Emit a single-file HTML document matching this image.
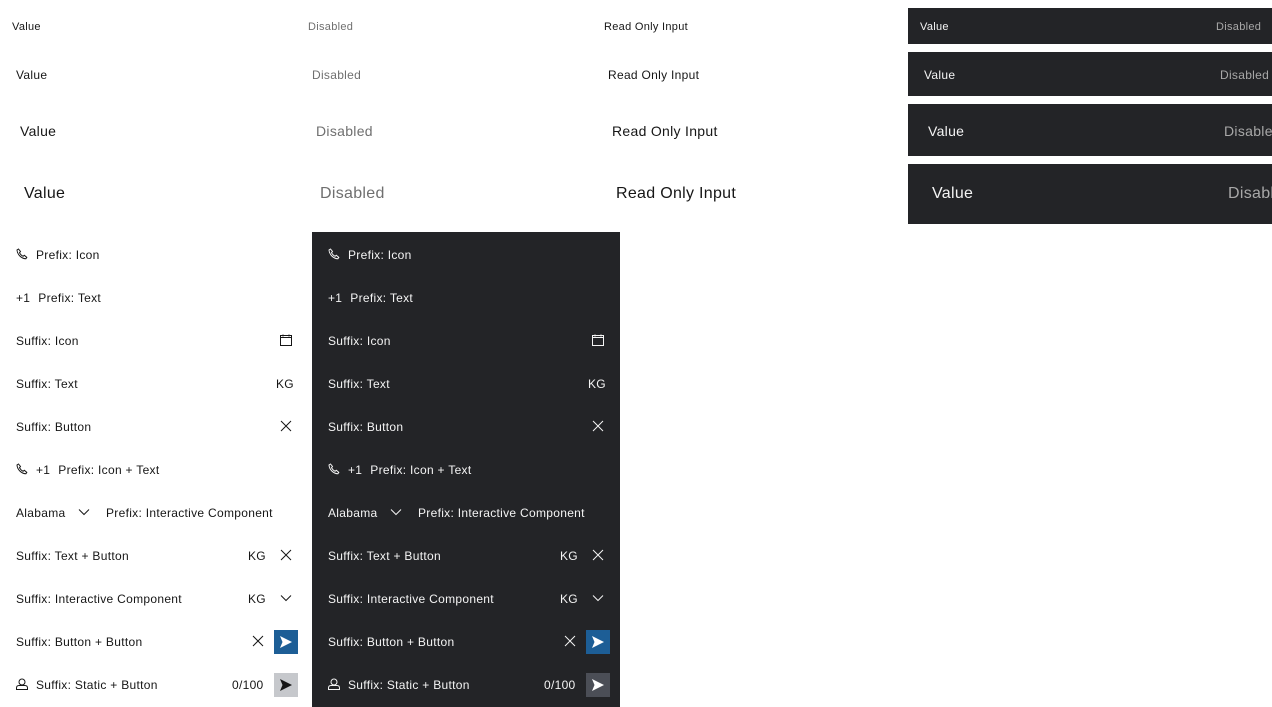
<!DOCTYPE html>
<html><head><meta charset="utf-8"><style>
*{margin:0;padding:0;box-sizing:border-box}
body{width:1272px;height:707px;overflow:hidden;background:#fff;font-family:"Liberation Sans",sans-serif;color:#161616;position:relative;letter-spacing:0.3px}
.a{position:absolute;white-space:nowrap}
.dis{color:#6f6f6f}
.dk{position:absolute;background:#232427;color:#f4f4f4}
.dk .dis{color:#a8a8a8}
.p{position:absolute;top:233px;width:308px;height:474px}
.p .a{font-size:12px;line-height:16px}
.dp{background:#232427;color:#f4f4f4;top:232px;height:475px}
.dp > *{margin-top:1px}
svg{position:absolute;fill:none;stroke:currentColor;stroke-width:1}
.btn{position:absolute;width:24px;height:24px;left:274px}
.g{display:inline-block;width:8px}
</style></head><body>
<div class="a" style="left:12px;top:21px;font-size:11px">Value</div>
<div class="a dis" style="left:308px;top:21px;font-size:11px">Disabled</div>
<div class="a" style="left:604px;top:21px;font-size:11px">Read Only Input</div>
<div class="a" style="left:16px;top:68px;font-size:12px">Value</div>
<div class="a dis" style="left:312px;top:68px;font-size:12px">Disabled</div>
<div class="a" style="left:608px;top:68px;font-size:12px">Read Only Input</div>
<div class="a" style="left:20px;top:123px;font-size:14px">Value</div>
<div class="a dis" style="left:316px;top:123px;font-size:14px">Disabled</div>
<div class="a" style="left:612px;top:123px;font-size:14px">Read Only Input</div>
<div class="a" style="left:24px;top:185px;font-size:16px">Value</div>
<div class="a dis" style="left:320px;top:185px;font-size:16px">Disabled</div>
<div class="a" style="left:616px;top:185px;font-size:16px">Read Only Input</div>

<div class="dk" style="left:908px;top:8px;width:364px;height:36px"><div class="a" style="left:12px;top:13px;font-size:11px">Value</div><div class="a dis" style="left:308px;top:13px;font-size:11px">Disabled</div></div>
<div class="dk" style="left:908px;top:52px;width:364px;height:44px"><div class="a" style="left:16px;top:16px;font-size:12px">Value</div><div class="a dis" style="left:312px;top:16px;font-size:12px">Disabled</div></div>
<div class="dk" style="left:908px;top:104px;width:364px;height:52px"><div class="a" style="left:20px;top:19px;font-size:14px">Value</div><div class="a dis" style="left:316px;top:19px;font-size:14px">Disabled</div></div>
<div class="dk" style="left:908px;top:164px;width:364px;height:60px;overflow:hidden"><div class="a" style="left:24px;top:21px;font-size:16px">Value</div><div class="a dis" style="left:320px;top:21px;font-size:16px">Disabled</div></div>

<!-- light panel -->
<div class="p" style="left:0">
<svg style="left:16px;top:15px" width="12" height="12" viewBox="0 0 12 12"><path d="M2.5 1l2 2.5-1 1.2c.8 1.6 2 2.8 3.6 3.6l1.2-1 2.5 2-1 1.5c-4.5-.3-8.5-4.3-8.8-8.8z"/></svg>
<div class="a" style="left:36px;top:14px">Prefix: Icon</div>
<div class="a" style="left:16px;top:57px">+1<span class="g"></span>Prefix: Text</div>
<div class="a" style="left:16px;top:100px">Suffix: Icon</div>
<svg style="left:280px;top:101px" width="12" height="12" viewBox="0 0 12 12"><path d="M.5 1.5h11v10H.5zM.5 3.5h11M3 .5v2M9 .5v2"/></svg>
<div class="a" style="left:16px;top:143px">Suffix: Text</div>
<div class="a" style="left:276px;top:143px">KG</div>
<div class="a" style="left:16px;top:186px">Suffix: Button</div>
<svg style="left:280px;top:187px" width="12" height="12" viewBox="0 0 12 12"><path d="M1 1l10 10M11 1L1 11"/></svg>
<svg style="left:16px;top:230px" width="12" height="12" viewBox="0 0 12 12"><path d="M2.5 1l2 2.5-1 1.2c.8 1.6 2 2.8 3.6 3.6l1.2-1 2.5 2-1 1.5c-4.5-.3-8.5-4.3-8.8-8.8z"/></svg>
<div class="a" style="left:36px;top:229px">+1<span class="g"></span>Prefix: Icon + Text</div>
<div class="a" style="left:16px;top:272px">Alabama</div>
<svg style="left:78px;top:275px" width="12" height="8" viewBox="0 0 12 8"><path d="M1 1.5l5 5 5-5"/></svg>
<div class="a" style="left:106px;top:272px">Prefix: Interactive Component</div>
<div class="a" style="left:16px;top:315px">Suffix: Text + Button</div>
<div class="a" style="left:248px;top:315px">KG</div>
<svg style="left:280px;top:316px" width="12" height="12" viewBox="0 0 12 12"><path d="M1 1l10 10M11 1L1 11"/></svg>
<div class="a" style="left:16px;top:358px">Suffix: Interactive Component</div>
<div class="a" style="left:248px;top:358px">KG</div>
<svg style="left:280px;top:361px" width="12" height="8" viewBox="0 0 12 8"><path d="M1 1.5l5 5 5-5"/></svg>
<div class="a" style="left:16px;top:401px">Suffix: Button + Button</div>
<svg style="left:252px;top:402px" width="12" height="12" viewBox="0 0 12 12"><path d="M1 1l10 10M11 1L1 11"/></svg>
<div class="btn" style="top:397px;background:#1d5e96"><svg style="left:6px;top:6px;fill:#fff;stroke:none" width="12" height="12" viewBox="0 0 12 12"><path d="M0 0l12 6-12 6 2.5-6z"/></svg></div>
<svg style="left:16px;top:445px" width="12" height="12" viewBox="0 0 12 12"><circle cx="6" cy="4" r="3"/><path d="M.5 11.5v-1.5c0-1.5 1-2.5 2.5-2.5h6c1.5 0 2.5 1 2.5 2.5v1.5z"/></svg>
<div class="a" style="left:36px;top:444px">Suffix: Static + Button</div>
<div class="a" style="left:232px;top:444px">0/100</div>
<div class="btn" style="top:440px;background:#c6c8cc"><svg style="left:6px;top:6px;fill:#161616;stroke:none" width="12" height="12" viewBox="0 0 12 12"><path d="M0 0l12 6-12 6 2.5-6z"/></svg></div>
</div>

<!-- dark panel -->
<div class="p dp" style="left:312px">
<svg style="left:16px;top:15px" width="12" height="12" viewBox="0 0 12 12"><path d="M2.5 1l2 2.5-1 1.2c.8 1.6 2 2.8 3.6 3.6l1.2-1 2.5 2-1 1.5c-4.5-.3-8.5-4.3-8.8-8.8z"/></svg>
<div class="a" style="left:36px;top:14px">Prefix: Icon</div>
<div class="a" style="left:16px;top:57px">+1<span class="g"></span>Prefix: Text</div>
<div class="a" style="left:16px;top:100px">Suffix: Icon</div>
<svg style="left:280px;top:101px" width="12" height="12" viewBox="0 0 12 12"><path d="M.5 1.5h11v10H.5zM.5 3.5h11M3 .5v2M9 .5v2"/></svg>
<div class="a" style="left:16px;top:143px">Suffix: Text</div>
<div class="a" style="left:276px;top:143px">KG</div>
<div class="a" style="left:16px;top:186px">Suffix: Button</div>
<svg style="left:280px;top:187px" width="12" height="12" viewBox="0 0 12 12"><path d="M1 1l10 10M11 1L1 11"/></svg>
<svg style="left:16px;top:230px" width="12" height="12" viewBox="0 0 12 12"><path d="M2.5 1l2 2.5-1 1.2c.8 1.6 2 2.8 3.6 3.6l1.2-1 2.5 2-1 1.5c-4.5-.3-8.5-4.3-8.8-8.8z"/></svg>
<div class="a" style="left:36px;top:229px">+1<span class="g"></span>Prefix: Icon + Text</div>
<div class="a" style="left:16px;top:272px">Alabama</div>
<svg style="left:78px;top:275px" width="12" height="8" viewBox="0 0 12 8"><path d="M1 1.5l5 5 5-5"/></svg>
<div class="a" style="left:106px;top:272px">Prefix: Interactive Component</div>
<div class="a" style="left:16px;top:315px">Suffix: Text + Button</div>
<div class="a" style="left:248px;top:315px">KG</div>
<svg style="left:280px;top:316px" width="12" height="12" viewBox="0 0 12 12"><path d="M1 1l10 10M11 1L1 11"/></svg>
<div class="a" style="left:16px;top:358px">Suffix: Interactive Component</div>
<div class="a" style="left:248px;top:358px">KG</div>
<svg style="left:280px;top:361px" width="12" height="8" viewBox="0 0 12 8"><path d="M1 1.5l5 5 5-5"/></svg>
<div class="a" style="left:16px;top:401px">Suffix: Button + Button</div>
<svg style="left:252px;top:402px" width="12" height="12" viewBox="0 0 12 12"><path d="M1 1l10 10M11 1L1 11"/></svg>
<div class="btn" style="top:397px;background:#1d5e96"><svg style="left:6px;top:6px;fill:#fff;stroke:none" width="12" height="12" viewBox="0 0 12 12"><path d="M0 0l12 6-12 6 2.5-6z"/></svg></div>
<svg style="left:16px;top:445px" width="12" height="12" viewBox="0 0 12 12"><circle cx="6" cy="4" r="3"/><path d="M.5 11.5v-1.5c0-1.5 1-2.5 2.5-2.5h6c1.5 0 2.5 1 2.5 2.5v1.5z"/></svg>
<div class="a" style="left:36px;top:444px">Suffix: Static + Button</div>
<div class="a" style="left:232px;top:444px">0/100</div>
<div class="btn" style="top:440px;background:#4b4e56"><svg style="left:6px;top:6px;fill:#fff;stroke:none" width="12" height="12" viewBox="0 0 12 12"><path d="M0 0l12 6-12 6 2.5-6z"/></svg></div>
</div>
</body></html>
